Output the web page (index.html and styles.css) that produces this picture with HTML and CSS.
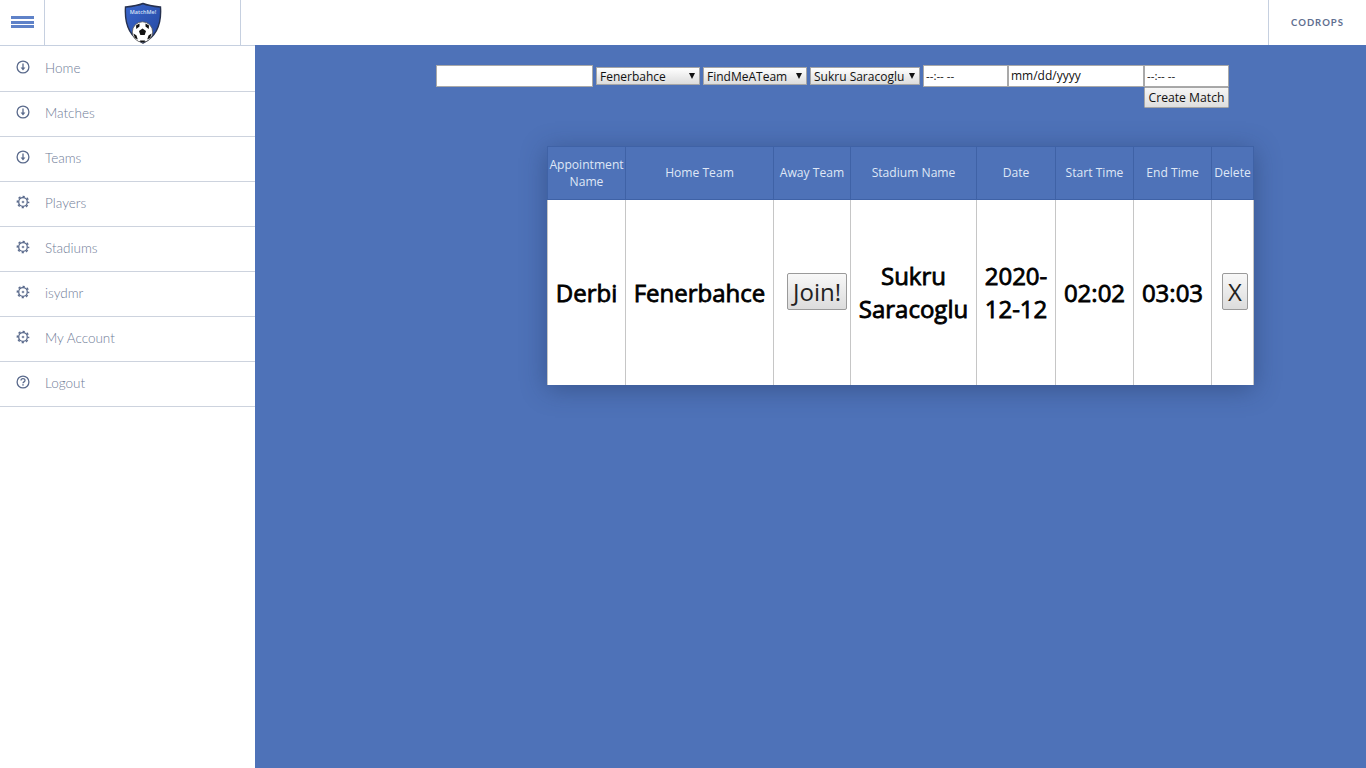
FILE: index.html
```html
<!DOCTYPE html>
<html lang="en">
<head>
<meta charset="utf-8">
<title>MatchMe!</title>
<link rel="stylesheet" href="styles.css">
</head>
<body>
<svg class="defs" width="0" height="0" aria-hidden="true">
  <symbol id="i-down" viewBox="0 0 14 14">
    <circle cx="7" cy="7" r="5.900" fill="none" stroke="currentColor" stroke-width="1.300"/>
    <path d="M7 3.400V8" stroke="currentColor" stroke-width="1.300" fill="none"/>
    <path d="M4.600 7.400H9.400L7 10.400Z" fill="currentColor"/>
  </symbol>
  <symbol id="i-gear" viewBox="0 0 14 14">
    <circle cx="7" cy="7" r="4.300" fill="none" stroke="currentColor" stroke-width="1.300"/>
    <circle cx="7" cy="7" r="5.600" fill="none" stroke="currentColor" stroke-width="1.500" stroke-dasharray="2.200 2.198" stroke-dashoffset="1.100"/>
    <circle cx="7" cy="7" r="1.300" fill="currentColor" opacity=".75"/>
  </symbol>
  <symbol id="i-help" viewBox="0 0 14 14">
    <circle cx="7" cy="7" r="5.900" fill="none" stroke="currentColor" stroke-width="1.300"/>
    <path d="M5 5.500C5 3 9 3 9 5.400 9 6.900 7 6.800 7 8.300" fill="none" stroke="currentColor" stroke-width="1.300"/>
    <rect x="6.300" y="9.200" width="1.400" height="1.400" fill="currentColor"/>
  </symbol>
</svg>
<div class="app">
  <header class="topbar">
    <a class="burger" href="#" aria-label="Menu"><span></span><span></span><span></span></a>
    <div class="brand">
      <svg class="logo" width="38" height="42" viewBox="0 0 38 42" aria-label="MatchMe!">
        <defs>
          <linearGradient id="shield" x1="0" y1="0" x2="1" y2="1">
            <stop offset="0" stop-color="#3a66cc"/>
            <stop offset="1" stop-color="#24479f"/>
          </linearGradient>
        </defs>
        <path d="M19 1.500C25 4 31 4.500 36.500 5 37.500 20 34 34 19 41 4 34 .5 20 1.500 5 7 4.500 13 4 19 1.500Z" fill="url(#shield)" stroke="#26314f" stroke-width="1.400"/>
        <text x="19" y="11.500" class="logo-text" text-anchor="middle">MatchMe!</text>
        <circle cx="18.500" cy="30" r="10.200" fill="#fff" stroke="#555" stroke-width=".8"/>
        <path d="M18.500 26.500L22 29 20.700 33H16.300L15 29Z" fill="#111"/>
        <path d="M12 23.500L15.500 21.500 15.500 24.500 12.300 27ZM25 23.500L21.500 21.500 21.500 24.500 24.700 27ZM9.500 31.500L12.500 33.500 13.800 37.500 10.800 36ZM27.500 31.500L24.500 33.500 23.200 37.500 26.200 36ZM16 38.500H21L20.500 40H16.500Z" fill="#111"/>
      </svg>
    </div>
    <div class="spacer"></div>
    <a class="codrops" href="#">CODROPS</a>
  </header>
  <div class="body">
    <nav class="sidebar">
      <a class="nav-item" href="#"><svg class="nav-icon"><use href="#i-down"/></svg>Home</a>
      <a class="nav-item" href="#"><svg class="nav-icon"><use href="#i-down"/></svg>Matches</a>
      <a class="nav-item" href="#"><svg class="nav-icon"><use href="#i-down"/></svg>Teams</a>
      <a class="nav-item" href="#"><svg class="nav-icon"><use href="#i-gear"/></svg>Players</a>
      <a class="nav-item" href="#"><svg class="nav-icon"><use href="#i-gear"/></svg>Stadiums</a>
      <a class="nav-item" href="#"><svg class="nav-icon"><use href="#i-gear"/></svg>isydmr</a>
      <a class="nav-item" href="#"><svg class="nav-icon"><use href="#i-gear"/></svg>My Account</a>
      <a class="nav-item" href="#"><svg class="nav-icon"><use href="#i-help"/></svg>Logout</a>
    </nav>
    <main class="main">
      <form class="match-form">
        <input class="field f-name" type="text">
        <span class="pick p-team"><select><option>Fenerbahce</option></select></span>
        <span class="pick p-team"><select><option>FindMeATeam</option></select></span>
        <span class="pick p-stadium"><select><option>Sukru Saracoglu</option></select></span>
        <input class="field f-time" type="text" value="--:-- --">
        <input class="field f-date" type="text" value="mm/dd/yyyy">
        <div class="last">
          <input class="field f-time" type="text" value="--:-- --">
          <button class="btn-create" type="button">Create Match</button>
        </div>
      </form>
      <table class="matches">
        <colgroup>
          <col class="c1"><col class="c2"><col class="c3"><col class="c4"><col class="c5"><col class="c6"><col class="c7"><col class="c8">
        </colgroup>
        <thead>
          <tr>
            <th>Appointment Name</th><th>Home Team</th><th>Away Team</th><th>Stadium Name</th><th>Date</th><th>Start Time</th><th>End Time</th><th>Delete</th>
          </tr>
        </thead>
        <tbody>
          <tr>
            <td>Derbi</td><td>Fenerbahce</td><td class="cell-action"><button class="btn-big btn-join" type="button">Join!</button></td><td>Sukru Saracoglu</td><td>2020-12-12</td><td>02:02</td><td>03:03</td><td class="cell-action"><button class="btn-big btn-x" type="button">X</button></td>
          </tr>
        </tbody>
      </table>
    </main>
  </div>
</div>
</body>
</html>
```

FILE: styles.css
```css
* { box-sizing: border-box; }
html, body { margin: 0; height: 100%; overflow: hidden; }
body { font-family: "Open Sans", sans-serif; background: #fff; }
.defs { position: absolute; }
a { text-decoration: none; }

.app { display: flex; flex-direction: column; height: 100vh; }

.topbar { display: flex; height: 45px; background: #fff; flex: none; }
.burger {
  width: 45px; border-right: 1px solid #c6d0e0;
  display: flex; flex-direction: column; justify-content: center; align-items: flex-start;
  padding: 0 0 1px 11px; gap: 1.500px;
}
.burger span { display: block; width: 23px; height: 3px; background: #5f82c8; }
.brand {
  width: 196px; border-right: 1px solid #c6d0e0;
  display: flex; justify-content: center; align-items: flex-start; padding-top: 2px;
}
.logo { display: block; }
.logo-text { font: 600 5.500px "Open Sans", sans-serif; fill: #d5e0f5; }
.spacer { flex: 1; }
.codrops {
  width: 98px; border-left: 1px solid #c6d0e0;
  display: flex; align-items: center; justify-content: center;
  font: 700 9.500px Lato, sans-serif; letter-spacing: 1px; color: #5f6f90;
}

.body { flex: 1; display: flex; min-height: 0; }

.sidebar { width: 255px; flex: none; background: #fff; border-top: 1px solid #c6d0e0; }
.nav-item {
  display: flex; align-items: center; height: 45px; padding: 0 0 3px 16px;
  border-bottom: 1px solid #cdd3de;
  font: 300 13.500px Lato, sans-serif; color: #6f7c97;
}
.nav-item:first-child { height: 46px; padding-bottom: 2px; }
.nav-icon { width: 14px; height: 14px; margin: -2px 15px 0 0; color: #5a6a8c; flex: none; }

.main { flex: 1; background: #4e72b8; padding: 20px 0 0 181px; min-width: 0; }

.match-form { display: flex; align-items: flex-start; font-size: 13px; }
.field {
  height: 22px; margin: 0; padding: 0 2px 1px;
  border: 1px solid #a9a9a9;
  background: #fff; font: 12.500px "Open Sans", sans-serif; color: #111;
}
.f-name { width: 157px; margin-right: 3px; }
.f-time { width: 85px; font-size: 11.500px; }
.f-date { width: 136px; font-size: 12px; }
.pick { position: relative; display: block; height: 18px; margin: 2px 3px 0 0; }
.p-team { width: 104px; }
.p-stadium { width: 110px; }
.pick select {
  appearance: none; -webkit-appearance: none;
  display: block; width: 100%; height: 18px; margin: 0; padding: 0 0 0 3px;
  border: 1px solid #a6a6a6; border-radius: 0;
  background: linear-gradient(#fff, #dcdcdc);
  font: 12px/15px "Open Sans", sans-serif; color: #111;
}
.pick::after {
  content: ""; position: absolute; right: 5px; top: 6px;
  border-style: solid; border-width: 6px 3px 0; border-color: #111 transparent transparent;
}
.last { display: flex; flex-direction: column; width: 85px; }
.btn-create {
  height: 21px; margin: 0; padding: 0;
  border: 1px solid #a6a6a6; border-radius: 1px;
  background: linear-gradient(#f6f6f6, #dedede);
  font: 12.200px "Open Sans", sans-serif; color: #111;
}

.matches {
  table-layout: fixed; border-collapse: collapse;
  width: 706px; margin: 38px 0 0 111px;
  box-shadow: 0 4px 24px rgba(30, 50, 90, .45);
}
.c1 { width: 78px; } .c2 { width: 148px; } .c3 { width: 77px; } .c4 { width: 126px; }
.c5 { width: 79px; } .c6 { width: 78px; } .c7 { width: 78px; } .c8 { width: 42px; }
.matches th {
  height: 53px; padding: 0 1px 1px; background: #4e72b8;
  border: 1px solid #3f62a6;
  font: 400 12.100px/17px "Open Sans", sans-serif; color: #dfe7f6;
  text-align: center; vertical-align: middle;
}
.matches td {
  height: 185px; padding: 0 7px; background: #fff;
  border: 1px solid #c6c6c6; border-top: 0; border-bottom: 0;
  font: 400 24px/33px "Open Sans", sans-serif; color: #000;
  -webkit-text-stroke: .8px #000;
  text-align: center; vertical-align: middle;
}
.matches td.cell-action { padding: 0 0 2px; text-align: left; }
.btn-big {
  margin: 0; padding: 0 5px; height: 37px;
  border: 1px solid #9a9a9a; border-radius: 2px;
  background: linear-gradient(#f8f8f8, #dcdcdc);
  font: 400 24px "Open Sans", sans-serif; color: #222;
  -webkit-text-stroke: 0;
}
.btn-join { margin-left: 13px; }
.btn-x { margin-left: 10px; }
```
